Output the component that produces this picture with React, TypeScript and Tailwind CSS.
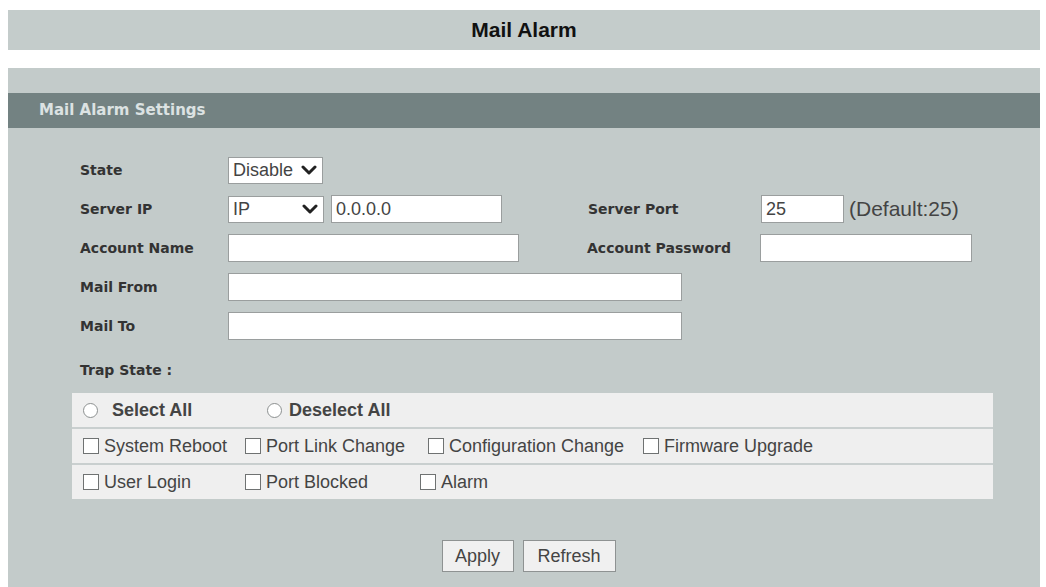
import React from 'react'

const label = "font-['DejaVu_Sans',sans-serif] font-bold text-[14px] text-[#333]"
const field = "font-['Liberation_Sans',Arial,sans-serif] text-[18px] text-[#444]"
const box = 'h-[28px] bg-white border border-[#9a9e9e] px-[4px] outline-none'

function Chevron() {
  return (
    <svg width="16" height="10" viewBox="0 0 16 10" className="shrink-0">
      <path d="M2 2 L8 8 L14 2" fill="none" stroke="#222" strokeWidth="3" strokeLinecap="round" strokeLinejoin="round" />
    </svg>
  )
}

function FakeSelect({ value, width }: { value: string; width: string }) {
  return (
    <div className={`${width} h-[27px] bg-white border border-[#9a9e9e] pl-[4px] pr-[5px] flex items-center justify-between ${field}`}>
      <span>{value}</span>
      <Chevron />
    </div>
  )
}

function Check({ text, width }: { text: string; width: string }) {
  return (
    <div className={`${width} flex items-center`}>
      <span className="w-[16px] h-[16px] bg-white border-[1.5px] border-[#6f7272] mr-[5px]" />
      <span className={field}>{text}</span>
    </div>
  )
}

function Radio({ text, width, gap }: { text: string; width: string; gap: string }) {
  return (
    <div className={`${width} flex items-center`}>
      <span className={`w-[15px] h-[15px] rounded-full bg-white border-[1.5px] border-[#8c9090] ${gap}`} />
      <span className={`${field} font-bold text-[#333]`}>{text}</span>
    </div>
  )
}

export default function App() {
  return (
    <div className="h-[587px] overflow-hidden bg-white">
      {/* Title */}
      <div className="ml-2 mr-[6px] mt-[10px] h-[40px] bg-[#c4cccb] flex items-center justify-center">
        <h1 className="font-['Liberation_Sans',Arial,sans-serif] font-bold text-[21px] text-[#111]">Mail Alarm</h1>
      </div>

      {/* Panel */}
      <div className="ml-2 mr-[6px] mt-[18px] bg-[#c3cbca] h-[600px]">
        <div className="h-[25px]" />
        <div className="h-[35px] bg-[#738282] flex items-center pl-[31px]">
          <span className="font-['DejaVu_Sans',sans-serif] font-bold text-[15px] text-[#dce2e2]">Mail Alarm Settings</span>
        </div>

        <div className="pt-[28px] pl-[72px]">
          <div className="flex flex-col gap-[11px]">
            <div className="h-[28px] flex items-center">
              <span className={`${label} w-[148px]`}>State</span>
              <FakeSelect value="Disable" width="w-[95px]" />
            </div>

            <div className="h-[28px] flex items-center">
              <span className={`${label} w-[148px]`}>Server IP</span>
              <FakeSelect value="IP" width="w-[96px]" />
              <input readOnly defaultValue="0.0.0.0" className={`${box} ${field} w-[171px] ml-[7px]`} />
              <span className={`${label} w-[173px] ml-[86px]`}>Server Port</span>
              <input readOnly defaultValue="25" className={`${box} ${field} w-[83px]`} />
              <span className="font-['Liberation_Sans',Arial,sans-serif] text-[21px] text-[#444] ml-[5px]">(Default:25)</span>
            </div>

            <div className="h-[28px] flex items-center">
              <span className={`${label} w-[148px]`}>Account Name</span>
              <input readOnly className={`${box} ${field} w-[291px]`} />
              <span className={`${label} w-[173px] ml-[68px]`}>Account Password</span>
              <input readOnly className={`${box} ${field} w-[212px]`} />
            </div>

            <div className="h-[28px] flex items-center">
              <span className={`${label} w-[148px]`}>Mail From</span>
              <input readOnly className={`${box} ${field} w-[454px]`} />
            </div>

            <div className="h-[28px] flex items-center">
              <span className={`${label} w-[148px]`}>Mail To</span>
              <input readOnly className={`${box} ${field} w-[454px]`} />
            </div>
          </div>

          <div className="mt-[20px] h-[20px] flex items-center">
            <span className={label}>Trap State :</span>
          </div>
        </div>

        {/* Trap table */}
        <div className="ml-[64px] mt-[13px] w-[921px] bg-[#efefef]">
          <div className="h-[34px] flex items-center pl-[11px]">
            <Radio text="Select All" width="w-[184px]" gap="mr-[14px]" />
            <Radio text="Deselect All" width="w-[200px]" gap="mr-[7px]" />
          </div>
          <div className="h-[36px] border-t-2 border-[#c9cfcf] flex items-center pl-[11px]">
            <Check text="System Reboot" width="w-[162px]" />
            <Check text="Port Link Change" width="w-[183px]" />
            <Check text="Configuration Change" width="w-[215px]" />
            <Check text="Firmware Upgrade" width="w-[200px]" />
          </div>
          <div className="h-[36px] border-t-2 border-[#c9cfcf] flex items-center pl-[11px]">
            <Check text="User Login" width="w-[162px]" />
            <Check text="Port Blocked" width="w-[175px]" />
            <Check text="Alarm" width="w-[100px]" />
          </div>
        </div>

        {/* Buttons */}
        <div className="mt-[41px] flex justify-center gap-[9px] pl-[9px]">
          <button className={`h-[32px] w-[72px] bg-[#f0f0f0] border border-[#8e9292] ${field}`}>Apply</button>
          <button className={`h-[32px] w-[93px] bg-[#f0f0f0] border border-[#8e9292] ${field}`}>Refresh</button>
        </div>
      </div>
    </div>
  )
}
